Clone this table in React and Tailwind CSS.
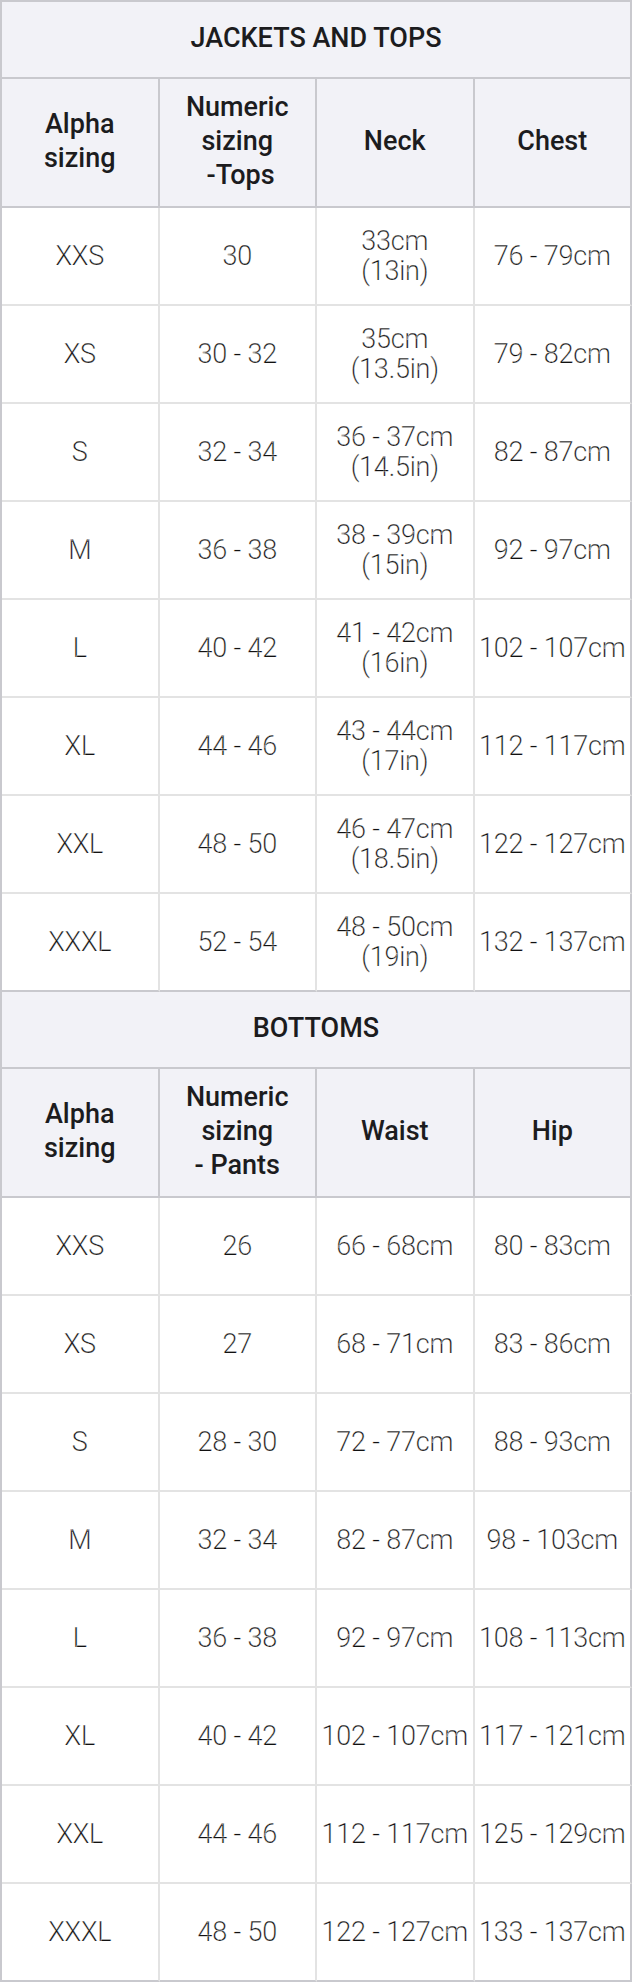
import React from "react";

const tops = [
  ["XXS", "30", ["33cm", "(13in)"], "76 - 79cm"],
  ["XS", "30 - 32", ["35cm", "(13.5in)"], "79 - 82cm"],
  ["S", "32 - 34", ["36 - 37cm", "(14.5in)"], "82 - 87cm"],
  ["M", "36 - 38", ["38 - 39cm", "(15in)"], "92 - 97cm"],
  ["L", "40 - 42", ["41 - 42cm", "(16in)"], "102 - 107cm"],
  ["XL", "44 - 46", ["43 - 44cm", "(17in)"], "112 - 117cm"],
  ["XXL", "48 - 50", ["46 - 47cm", "(18.5in)"], "122 - 127cm"],
  ["XXXL", "52 - 54", ["48 - 50cm", "(19in)"], "132 - 137cm"],
];

const bottoms = [
  ["XXS", "26", "66 - 68cm", "80 - 83cm"],
  ["XS", "27", "68 - 71cm", "83 - 86cm"],
  ["S", "28 - 30", "72 - 77cm", "88 - 93cm"],
  ["M", "32 - 34", "82 - 87cm", "98 - 103cm"],
  ["L", "36 - 38", "92 - 97cm", "108 - 113cm"],
  ["XL", "40 - 42", "102 - 107cm", "117 - 121cm"],
  ["XXL", "44 - 46", "112 - 117cm", "125 - 129cm"],
  ["XXXL", "48 - 50", "122 - 127cm", "133 - 137cm"],
];

function Section({ title, headers, rows }) {
  return (
    <>
      <div className="col-span-4 h-[77px] flex items-center justify-center bg-[#f2f2f7] border-r-2 border-b-2 border-[#c9c9ce] text-[27px] font-medium text-[#1c1c1e] pb-[3px]">
        {title}
      </div>
      {headers.map((h, i) => (
        <div
          key={i}
          className="h-[129px] flex items-center justify-center text-center bg-[#f2f2f7] border-r-2 border-b-2 border-[#c9c9ce] text-[27px] leading-[34px] font-medium text-[#1c1c1e] pb-[4px]"
        >
          <div>
            {h.map((l, j) => (
              <div key={j} className="whitespace-pre">{l}</div>
            ))}
          </div>
        </div>
      ))}
      {rows.map((r, ri) =>
        r.map((c, ci) => {
          const lastRow = ri === rows.length - 1;
          const rb = lastRow ? "border-b-[#c9c9ce]" : "border-b-[#e3e3e3]";
          const rr = ci === 3 ? "border-r-[#c9c9ce]" : "border-r-[#e3e3e3]";
          return (
            <div
              key={ri + "-" + ci}
              className={
                "h-[98px] flex items-center justify-center text-center border-r-2 border-b-2 bg-white text-[27px] leading-[30px] font-light text-[#111111] whitespace-nowrap tracking-[-0.2px] [-webkit-text-stroke:0.25px_white] " +
                rb +
                " " +
                rr
              }
            >
              {Array.isArray(c) ? (
                <div>
                  <div>{c[0]}</div>
                  <div>{c[1]}</div>
                </div>
              ) : (
                c
              )}
            </div>
          );
        })
      )}
    </>
  );
}

export default function App() {
  return (
    <div
      className="w-[632px] bg-white"
      style={{ fontFamily: "Roboto, 'Liberation Sans', sans-serif" }}
    >
      <div className="grid grid-cols-4 border-l-2 border-t-2 border-[#c9c9ce]">
        <Section
          title="JACKETS AND TOPS"
          headers={[
            ["Alpha", "sizing"],
            ["Numeric", "sizing", " -Tops"],
            ["Neck"],
            ["Chest"],
          ]}
          rows={tops}
        />
        <Section
          title="BOTTOMS"
          headers={[
            ["Alpha", "sizing"],
            ["Numeric", "sizing", "- Pants"],
            ["Waist"],
            ["Hip"],
          ]}
          rows={bottoms}
        />
      </div>
    </div>
  );
}
